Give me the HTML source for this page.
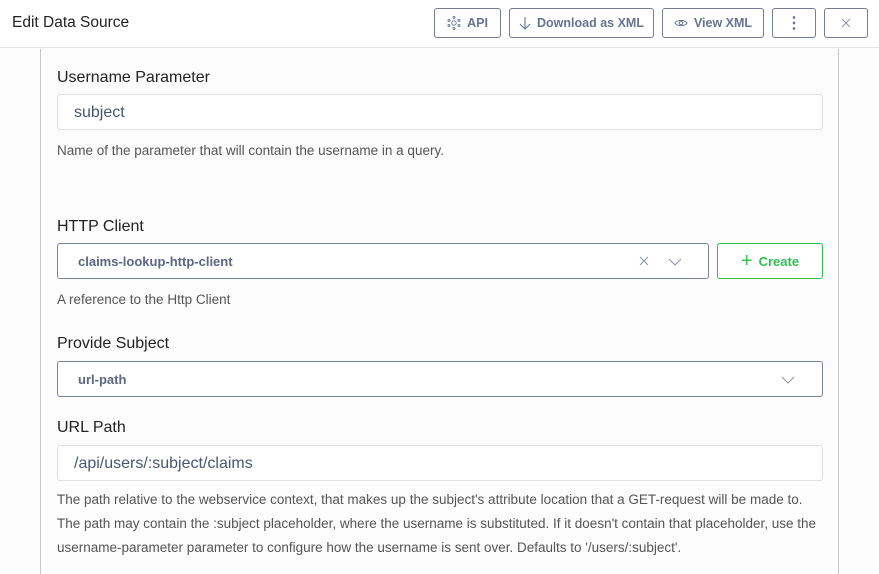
<!DOCTYPE html>
<html><head><style>
*{box-sizing:border-box;margin:0;padding:0}
body{width:879px;height:574px;overflow:hidden;background:#fcfcfc;font-family:"Liberation Sans",sans-serif;position:relative;color:#222}
.hdr{position:absolute;left:0;top:0;width:879px;height:48px;border-bottom:1px solid #e6e6e6;background:#fff}
.title{position:absolute;left:12px;top:14px;font-size:15.5px;color:#222}
.btn{position:absolute;top:8px;height:30px;border:1px solid #747c98;border-radius:3px;color:#6a7290;font-size:12.5px;font-weight:bold;display:flex;align-items:center;justify-content:center;gap:6px;background:#fff}
.vl{position:absolute;top:49px;bottom:0;width:1px;background:#c8c8c8}
.lbl{position:absolute;left:57px;font-size:16px;color:#222}
.inp{position:absolute;left:57px;width:766px;height:36px;border:1px solid #e0e0e0;border-radius:3px;background:#fff;font-size:16px;color:#4b5573;padding:9px 16px}
.sel{position:absolute;left:57px;height:36px;border:1px solid #7a819c;border-radius:3px;background:#fff;font-size:13px;font-weight:bold;color:#5d6582;padding:10px 20px}
.help{position:absolute;left:57px;font-size:13.5px;color:#555;line-height:24px;white-space:nowrap}
</style></head><body>
<div class="hdr">
<div class="title">Edit Data Source</div>
<div class="btn" style="left:434px;width:67px"><svg width="14" height="14" viewBox="0 0 14 14" fill="none" stroke="#747c98" stroke-width="1"><circle cx="7" cy="7" r="2.2"/><circle cx="7" cy="1.5" r="1"/><circle cx="7" cy="12.5" r="1"/><circle cx="2" cy="4.5" r="1"/><circle cx="12" cy="4.5" r="1"/><circle cx="2" cy="9.5" r="1"/><circle cx="12" cy="9.5" r="1"/></svg>API</div>
<div class="btn" style="left:509px;width:145px"><svg width="12" height="14" viewBox="0 0 12 14" fill="none" stroke="#747c98" stroke-width="1.2"><path d="M6 1v12M1 8l5 5 5-5"/></svg>Download as XML</div>
<div class="btn" style="left:662px;width:102px"><svg width="14" height="10" viewBox="0 0 14 10" fill="none" stroke="#747c98" stroke-width="1.1"><path d="M1 5C3 1.5 11 1.5 13 5 11 8.5 3 8.5 1 5z"/><circle cx="7" cy="5" r="1.7"/></svg>View XML</div>
<div class="btn" style="left:772px;width:44px;font-size:16px">⋮</div>
<div class="btn" style="left:824px;width:44px"><svg width="10" height="10" viewBox="0 0 10 10" stroke="#8a90a8" stroke-width="1"><path d="M1 1l8 8M9 1l-8 8"/></svg></div>
</div>
<div class="vl" style="left:40px"></div>
<div class="vl" style="left:838px"></div>

<div class="lbl" style="top:69px">Username Parameter</div>
<div class="inp" style="top:94px">subject</div>
<div class="help" style="top:139px">Name of the parameter that will contain the username in a query.</div>

<div class="lbl" style="top:218px">HTTP Client</div>
<div class="sel" style="top:243px;width:652px">claims-lookup-http-client
<svg style="position:absolute;left:581px;top:12px" width="10" height="10" viewBox="0 0 10 10" stroke="#8a90a8" stroke-width="1"><path d="M1 1l8 8M9 1l-8 8"/></svg>
<svg style="position:absolute;left:610px;top:14px" width="14" height="8" viewBox="0 0 14 8" fill="none" stroke="#8a90a8" stroke-width="1"><path d="M1 1l6 6 6-6"/></svg></div>
<div style="position:absolute;left:717px;top:243px;width:106px;height:36px;border:1px solid #2fbf50;border-radius:3px;background:#fff;color:#2fbf50;font-size:13px;font-weight:bold;display:flex;align-items:center;justify-content:center;gap:6px"><span style="font-size:20px;font-weight:normal;line-height:1">+</span>Create</div>
<div class="help" style="top:288px">A reference to the Http Client</div>

<div class="lbl" style="top:335px">Provide Subject</div>
<div class="sel" style="top:361px;width:766px">url-path
<svg style="position:absolute;left:723px;top:14px" width="14" height="8" viewBox="0 0 14 8" fill="none" stroke="#8a90a8" stroke-width="1"><path d="M1 1l6 6 6-6"/></svg></div>

<div class="lbl" style="top:419px">URL Path</div>
<div class="inp" style="top:445px">/api/users/:subject/claims</div>
<div class="help" style="top:488px">The path relative to the webservice context, that makes up the subject's attribute location that a GET-request will be made to.<br>The path may contain the :subject placeholder, where the username is substituted. If it doesn't contain that placeholder, use the<br>username-parameter parameter to configure how the username is sent over. Defaults to '/users/:subject'.</div>
</body></html>
